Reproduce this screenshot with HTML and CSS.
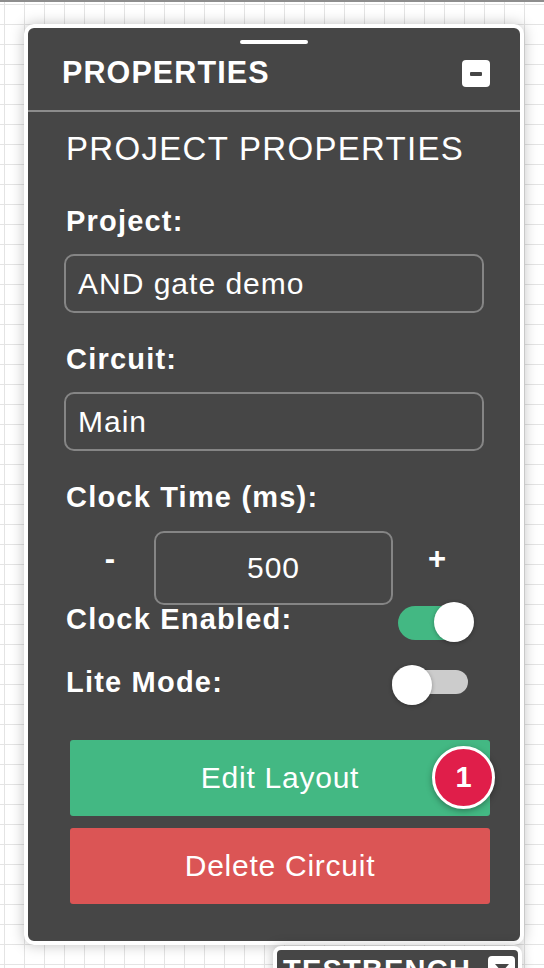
FILE: index.html
```html
<!DOCTYPE html>
<html>
<head>
<meta charset="utf-8">
<link rel="stylesheet" href="styles.css">
</head>
<body>
<div class="topbar"></div>
<div class="panel">
  <div class="handle"></div>
  <div class="panel-header">
    <span class="panel-title">PROPERTIES</span>
    <div class="min-btn"><span class="min-bar"></span></div>
  </div>
  <div class="separator"></div>
  <div class="panel-body">
    <div class="section-title">PROJECT PROPERTIES</div>
    <div class="field-label">Project:</div>
    <div class="text-input">AND gate demo</div>
    <div class="field-label">Circuit:</div>
    <div class="text-input">Main</div>
    <div class="field-label">Clock Time (ms):</div>
    <div class="clock-row">
      <div class="step-btn">-</div>
      <div class="num-input">500</div>
      <div class="step-btn">+</div>
    </div>
    <div class="toggle-row">
      <span class="row-label">Clock Enabled:</span>
      <div class="toggle on"><span class="track"></span><span class="knob"></span></div>
    </div>
    <div class="toggle-row lite">
      <span class="row-label">Lite Mode:</span>
      <div class="toggle off"><span class="track"></span><span class="knob"></span></div>
    </div>
    <div class="btn btn-green">Edit Layout<span class="badge">1</span></div>
    <div class="btn btn-red">Delete Circuit</div>
  </div>
</div>
<div class="panel-mini">
  <span class="mini-title">TESTBENCH</span>
  <div class="mini-btn"><span class="mini-tri"></span></div>
</div>
</body>
</html>
```

FILE: styles.css
```css
html, body {
  margin: 0;
  padding: 0;
}
body {
  height: 968px;
  overflow: hidden;
  position: relative;
  background-color: #fff;
  background-image:
    linear-gradient(#e4e4e4 1px, transparent 1px),
    linear-gradient(90deg, #e4e4e4 1px, transparent 1px);
  background-size: 20px 20px;
  background-position: 4px 4px;
  font-family: "Liberation Sans", Arial, sans-serif;
  color: #fff;
}
.topbar {
  height: 2px;
  background: #8e8e8e;
}
.panel {
  margin: 22px 0 0 24px;
  width: 492px;
  border: 4px solid #fff;
  border-radius: 10px;
  background: #464646;
  box-shadow: 0 0 14px rgba(0, 0, 0, 0.25);
  display: flex;
  flex-direction: column;
}
.handle {
  margin: 12px auto 0;
  width: 68px;
  height: 4px;
  border-radius: 2px;
  background: #fff;
}
.panel-header {
  height: 66px;
  box-sizing: border-box;
  padding: 13px 30px 0 34px;
  display: flex;
  justify-content: space-between;
  align-items: flex-start;
}
.panel-title {
  font-weight: bold;
  font-size: 30.5px;
  line-height: 30px;
  letter-spacing: 1.1px;
}
.min-btn {
  margin-top: 3px;
  width: 28px;
  height: 27px;
  border-radius: 4px;
  background: #fff;
  display: flex;
  align-items: center;
  justify-content: center;
}
.min-bar {
  width: 12px;
  height: 4px;
  border-radius: 1px;
  background: #464646;
}
.separator {
  height: 2px;
  background: #8c8c8c;
}
.panel-body {
  padding: 0 0 37px 38px;
  display: flex;
  flex-direction: column;
}
.section-title {
  margin-top: 17px;
  font-size: 33px;
  line-height: 40px;
  letter-spacing: 1.3px;
}
.field-label {
  margin-top: 34px;
  font-weight: bold;
  font-size: 29px;
  line-height: 36px;
  letter-spacing: 1.2px;
}
.text-input + .field-label {
  margin-top: 28px;
}
.text-input {
  margin: 15px 0 0 -2px;
  width: 420px;
  height: 59px;
  box-sizing: border-box;
  border: 2px solid #858585;
  border-radius: 10px;
  padding: 0 12px;
  display: flex;
  align-items: center;
  font-size: 30px;
  letter-spacing: 1px;
}
.clock-row {
  margin-top: 16px;
  display: flex;
  height: 74px;
}
.step-btn {
  width: 88px;
  text-align: center;
  font-weight: bold;
  font-size: 31px;
  line-height: 56px;
}
.num-input {
  width: 239px;
  height: 74px;
  box-sizing: border-box;
  border: 2px solid #858585;
  border-radius: 10px;
  display: flex;
  align-items: center;
  justify-content: center;
  font-size: 30px;
  letter-spacing: 1px;
}
.toggle-row {
  height: 34px;
  padding-right: 46px;
  display: flex;
  justify-content: space-between;
  align-items: center;
}
.toggle-row.lite {
  margin-top: 29px;
}
.row-label {
  font-weight: bold;
  font-size: 29px;
  line-height: 34px;
  letter-spacing: 1.2px;
  padding-bottom: 6px;
}
.toggle {
  position: relative;
  width: 82px;
  height: 34px;
}
.track {
  position: absolute;
}
.toggle.on .track {
  left: 6px;
  top: 1px;
  width: 66px;
  height: 34px;
  border-radius: 17px;
  background: #43b883;
}
.toggle.off .track {
  left: 0;
  top: 2px;
  width: 76px;
  height: 24px;
  border-radius: 12px;
  background: #cccccc;
}
.knob {
  position: absolute;
  top: -3px;
  width: 40px;
  height: 40px;
  border-radius: 50%;
  background: #fff;
  box-shadow: 0 1px 4px rgba(0, 0, 0, 0.3);
}
.toggle.on .knob {
  left: 42px;
}
.toggle.off .knob {
  left: 0;
}
.btn {
  position: relative;
  margin-left: 4px;
  width: 420px;
  height: 76px;
  border-radius: 3px;
  display: flex;
  align-items: center;
  justify-content: center;
  font-size: 30px;
  letter-spacing: 0.75px;
}
.btn-green {
  margin-top: 38px;
  background: #43b883;
}
.btn-red {
  margin-top: 12px;
  background: #db5555;
}
.badge {
  position: absolute;
  left: 362px;
  top: 6px;
  width: 63px;
  height: 63px;
  box-sizing: border-box;
  border: 3px solid #fff;
  border-radius: 50%;
  background: #e01e4a;
  box-shadow: 0 2px 6px rgba(0, 0, 0, 0.35);
  display: flex;
  align-items: center;
  justify-content: center;
  font-weight: bold;
  font-size: 29px;
  letter-spacing: 0;
}
.panel-mini {
  position: absolute;
  left: 273px;
  top: 946px;
  width: 232px;
  height: 60px;
  border: 4px solid #fff;
  border-radius: 8px;
  background: #464646;
  box-shadow: 0 0 12px rgba(0, 0, 0, 0.25);
  display: flex;
  justify-content: space-between;
  align-items: flex-start;
  padding: 0 3px 0 6px;
  box-sizing: content-box;
}
.mini-title {
  margin-top: 5px;
  font-weight: bold;
  font-size: 29px;
  line-height: 30px;
  letter-spacing: 1.2px;
}
.mini-btn {
  margin-top: 6px;
  width: 27px;
  height: 27px;
  border-radius: 4px;
  background: #fff;
  position: relative;
}
.mini-tri {
  position: absolute;
  left: 7px;
  top: 8px;
  width: 0;
  height: 0;
  border-left: 7px solid transparent;
  border-right: 7px solid transparent;
  border-top: 8px solid #464646;
}
```
